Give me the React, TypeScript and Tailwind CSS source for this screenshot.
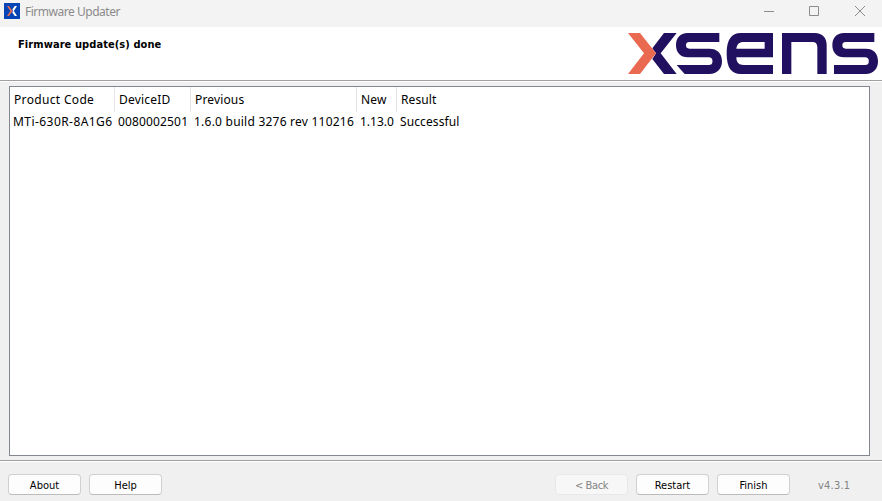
import type { ReactNode } from "react";

const notoFont = "font-['Noto_Sans','Noto_Sans_CJK_SC',sans-serif]";
const dialogFont = "font-['DejaVu_Sans_Condensed','DejaVu_Sans',sans-serif]";

function AppIcon() {
  return (
    <svg width="16" height="16" viewBox="0 0 16 16">
      <rect width="16" height="16" fill="#0645b5" />
      <path d="M3 3h2l3.5 5L5 13H3l3.3-5z" fill="#ea6951" />
      <path d="M13 3h-2.2L8.3 6.5 9 8l-.7 1.5 2.5 3.5H13L9.8 8z" fill="#fff" />
    </svg>
  );
}

function XsensLogo() {
  return (
    <svg width="250" height="41" viewBox="24 39 750 123" preserveAspectRatio="none">
      <g fill="#20105f">
        <path d="M132 39H170L122 100L170 162H132L97 117L108 100L97 85Z" />
        <path d="M298 39H203C180 39 168 54 168 76C168 98 182 112 203 112H266A11 11 0 0 1 266 135H170L194 162H268C292 162 306 146 306 124C306 100 292 86 268 86H208A10 10 0 0 1 208 66H298Z" />
        <path
          fillRule="evenodd"
          d="M459 39H362C335 39 320 58 320 100C320 145 335 162 362 162H459V135H371C357 135 349 128 349 112H459ZM349 86C351 72 358 66 370 66H434V86Z"
        />
        <path d="M486 39H584C608 39 620 54 620 76V162H592V82C592 71 587 66 577 66H514V162H486Z" />
        <path d="M763 39H672C649 39 637 54 637 76C637 98 651 112 672 112H735A11 11 0 0 1 735 135H642V162H737C761 162 774 146 774 124C774 100 761 86 737 86H677A10 10 0 0 1 677 66H763Z" />
      </g>
      <path d="M24 39H60L108 100L60 162H24L72 100Z" fill="#ea6951" />
    </svg>
  );
}

function PushButton({ children, disabled = false }: { children: ReactNode; disabled?: boolean }) {
  return (
    <button
      disabled={disabled}
      className={`flex h-[21px] w-[73px] items-center justify-center rounded-[4px] border pt-[2px] text-[11px] leading-none ${
        disabled
          ? "border-[#e8e8e8] bg-[#f7f7f7] tracking-[-0.4px] text-[#838383]"
          : "border-[#d0d0d0] border-b-[#bcbcbc] bg-[#fdfdfd] text-black"
      }`}
    >
      {children}
    </button>
  );
}

const columns = [
  { title: "Product Code", value: "MTi-630R-8A1G6", width: "w-[105px]", titleTracking: "tracking-[0.33px]", valueTracking: "tracking-[0.44px]" },
  { title: "DeviceID", value: "0080002501", width: "w-[76px]", titleTracking: "tracking-[0.2px]", valueTracking: "tracking-[0.15px]" },
  { title: "Previous", value: "1.6.0 build 3276 rev 110216", width: "w-[166px]", titleTracking: "tracking-[0.15px]", valueTracking: "tracking-[0.23px]" },
  { title: "New", value: "1.13.0", width: "w-[40px]", titleTracking: "tracking-[0.2px]", valueTracking: "tracking-normal" },
  { title: "Result", value: "Successful", width: "w-[80px]", titleTracking: "tracking-[0.1px]", valueTracking: "tracking-[0.1px]" },
];

export default function App() {
  return (
    <div className="flex h-[501px] w-[882px] flex-col overflow-hidden bg-[#f0f0f0]">
      <header className={`flex h-[27px] shrink-0 bg-[#f3f3f3] pl-1 text-[#8b8b8b] ${notoFont}`}>
        <div className="mt-[3px]"><AppIcon /></div>
        <h1 className="ml-[5px] mt-[3px] text-[12px] leading-[17px] tracking-[-0.48px]">Firmware Updater</h1>
        <svg className="ml-auto mr-4" width="103" height="27" viewBox="0 0 103 27" fill="none" stroke="#8b8b8b">
          <path d="M1 11.5h10M46.5 6.5h9v9h-9zM92 6l10 10M102 6L92 16" />
        </svg>
      </header>

      <section className="flex h-[53px] shrink-0 justify-between bg-white pl-[18px] pr-1 pt-[6px]">
        <h2 className={`mt-[3px] text-[11px] font-bold leading-[17px] tracking-[0.08px] ${dialogFont}`}>Firmware update(s) done</h2>
        <XsensLogo />
      </section>
      <div className="h-[2px] shrink-0 border-b border-t border-b-white border-t-[#a0a0a0]" />

      <main className="ml-[9px] mr-3 mt-1 h-[370px] shrink-0 border border-[#828790] bg-white">
        <div className={`flex text-[12px] text-black ${notoFont}`}>
          {columns.map((column, index) => (
            <div key={column.title} className={`shrink-0 whitespace-nowrap ${column.width}`}>
              <div className={`h-[25px] pl-1 pt-[4px] leading-[17px] ${column.titleTracking} ${index < 4 ? "border-r border-[#e5e5e5]" : ""}`}>
                {column.title}
              </div>
              <div className={`pl-[3px] pt-[1px] leading-[17px] ${column.valueTracking}`}>{column.value}</div>
            </div>
          ))}
        </div>
      </main>

      <div className="mt-1 h-[2px] shrink-0 border-b border-t border-b-white border-t-[#a0a0a0]" />
      <footer className={`flex gap-2 pl-2 pt-3 ${dialogFont}`}>
        <PushButton>About</PushButton>
        <PushButton>Help</PushButton>
        <div className="ml-[385px] flex gap-2">
          <PushButton disabled>&lt; Back</PushButton>
          <PushButton>Restart</PushButton>
          <PushButton>Finish</PushButton>
        </div>
        <span className="ml-[20px] text-[11px] leading-[23px] tracking-[0.2px] text-[#838383]">v4.3.1</span>
      </footer>
    </div>
  );
}
